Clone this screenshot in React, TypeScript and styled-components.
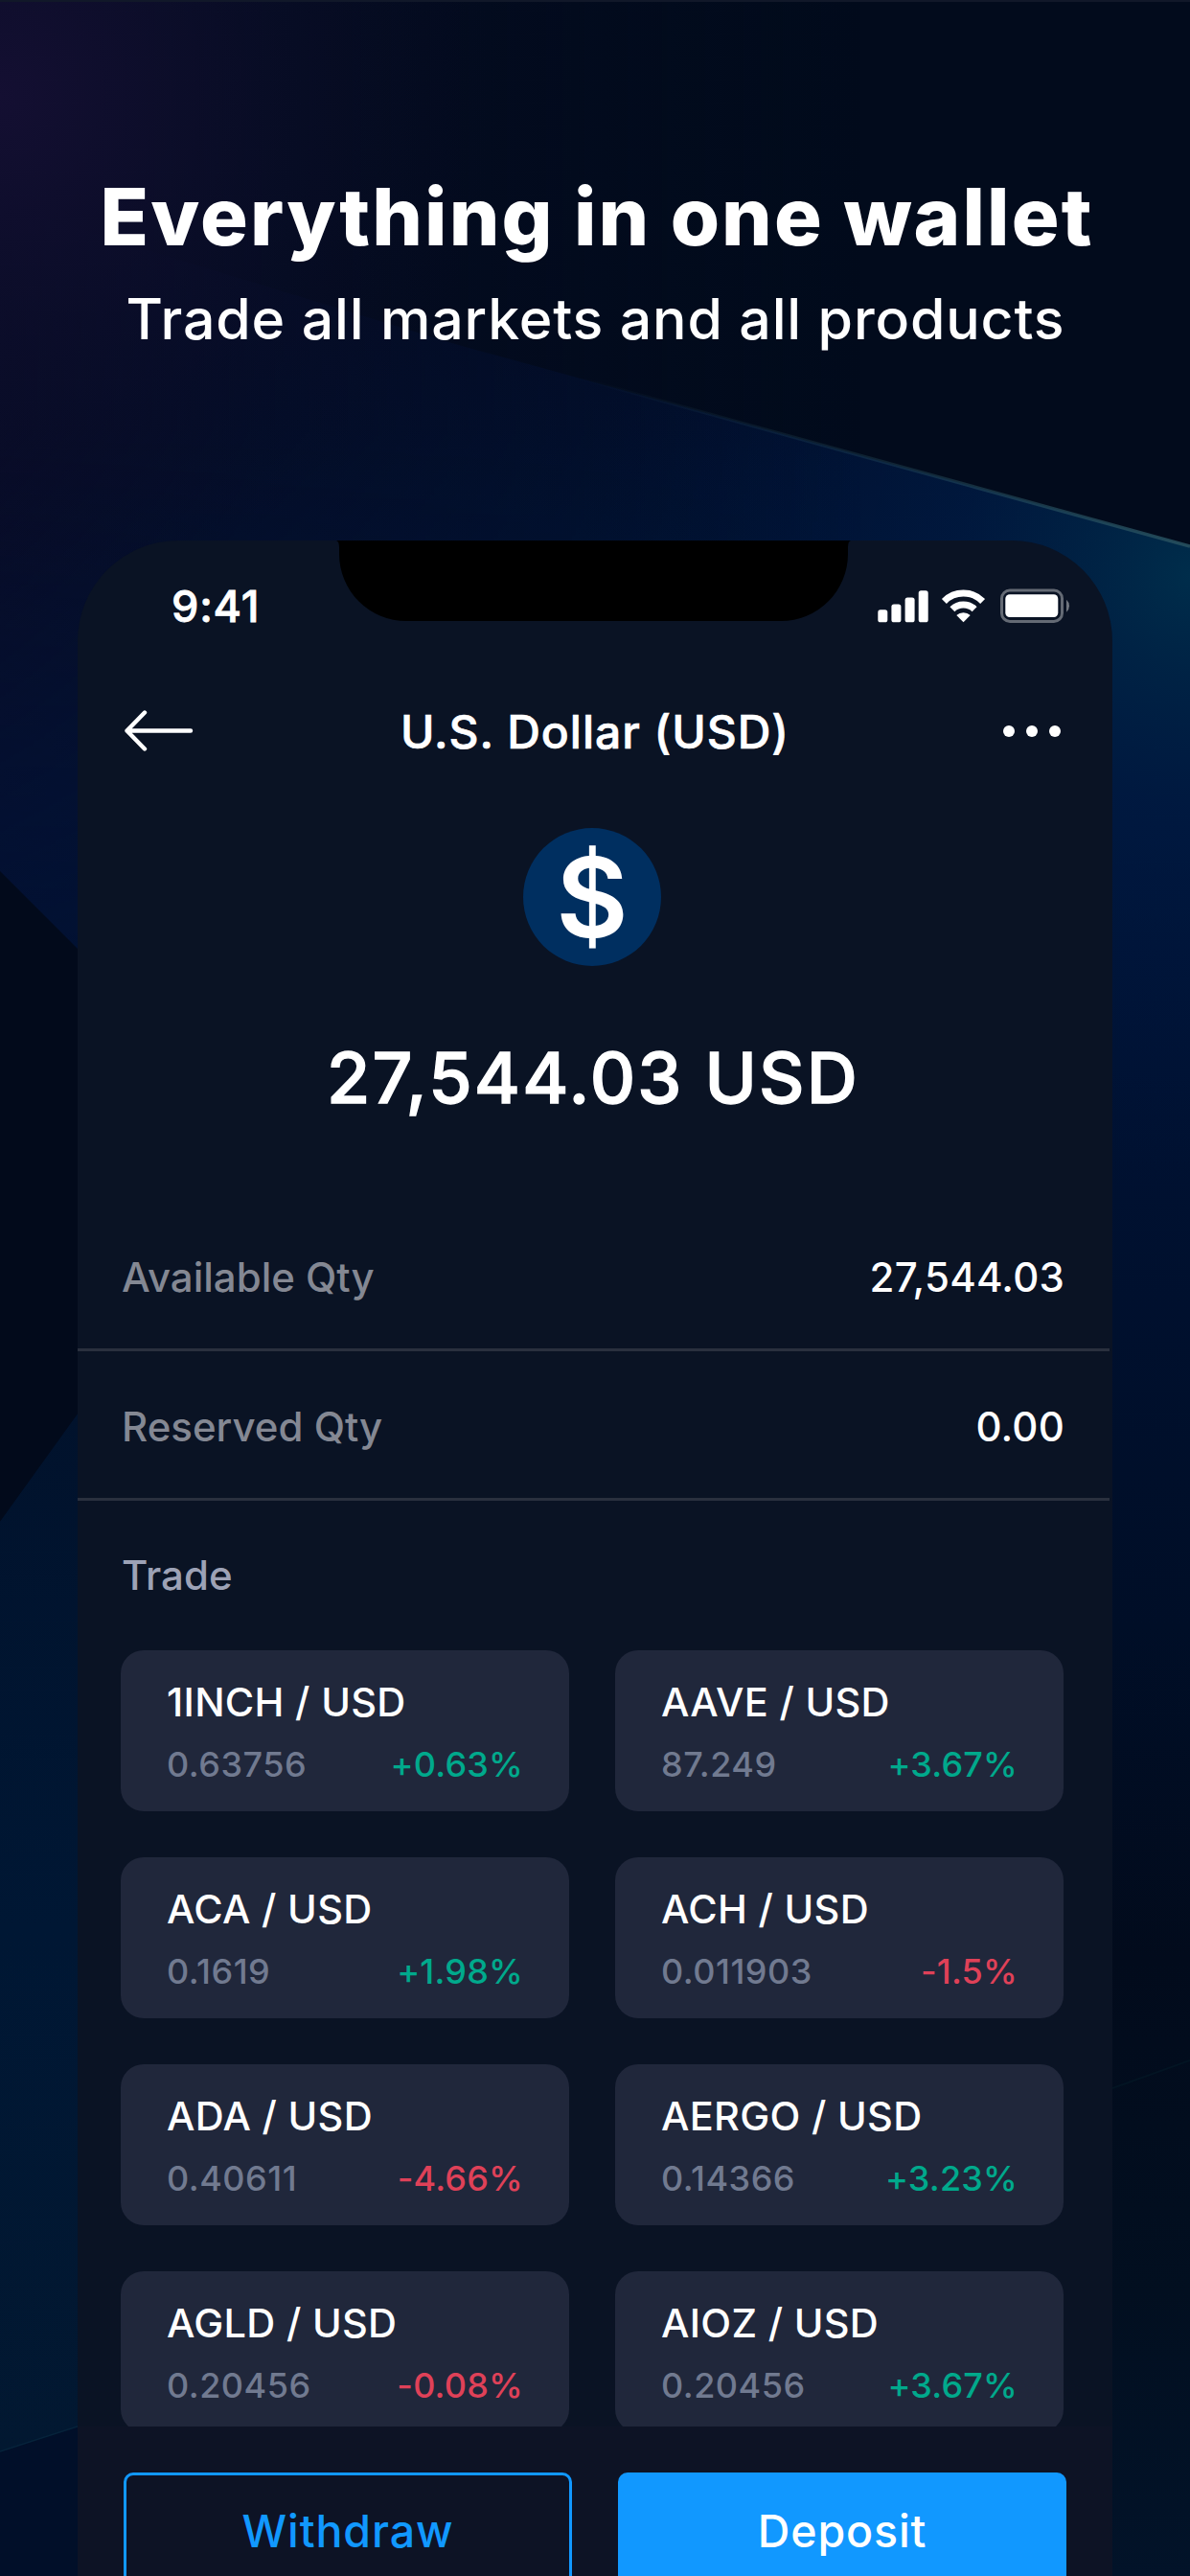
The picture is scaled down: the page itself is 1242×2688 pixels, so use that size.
import styled, { createGlobalStyle } from 'styled-components';

const GlobalStyle = createGlobalStyle`
  * {
    box-sizing: border-box;
  }

  body {
    margin: 0;
    background: #020b1c;
    font-family: Inter, 'Liberation Sans', sans-serif;
    color: #fff;
    -webkit-font-smoothing: antialiased;
  }
`;

const pairs = [
  { name: '1INCH / USD', price: '0.63756', change: '+0.63%' },
  { name: 'AAVE / USD', price: '87.249', change: '+3.67%' },
  { name: 'ACA / USD', price: '0.1619', change: '+1.98%' },
  { name: 'ACH / USD', price: '0.011903', change: '-1.5%' },
  { name: 'ADA / USD', price: '0.40611', change: '-4.66%' },
  { name: 'AERGO / USD', price: '0.14366', change: '+3.23%' },
  { name: 'AGLD / USD', price: '0.20456', change: '-0.08%' },
  { name: 'AIOZ / USD', price: '0.20456', change: '+3.67%' },
];

const Backdrop = () => (
  <BackdropSvg viewBox="0 0 1242 2688" xmlns="http://www.w3.org/2000/svg">
    <defs>
      <radialGradient id="bg_purple" gradientUnits="userSpaceOnUse" cx={0} cy={100} r={520}>
        <stop offset="0%" stopColor="#140f32" />
        <stop offset="45%" stopColor="#0e0e2b" stopOpacity={0.6} />
        <stop offset="100%" stopColor="#080c25" stopOpacity={0} />
      </radialGradient>
      <linearGradient id="bg_wedge" gradientUnits="userSpaceOnUse" x1={0} y1={214} x2={0} y2={2688}>
        <stop offset="0%" stopColor="#040c24" />
        <stop offset="8%" stopColor="#020f2c" />
        <stop offset="18%" stopColor="#001436" />
        <stop offset="26%" stopColor="#001439" />
        <stop offset="40%" stopColor="#001131" />
        <stop offset="60%" stopColor="#000e27" />
        <stop offset="74%" stopColor="#020b1c" />
        <stop offset="88%" stopColor="#020f20" />
        <stop offset="100%" stopColor="#021329" />
      </linearGradient>
      <radialGradient id="bg_teal" gradientUnits="userSpaceOnUse" cx={1242} cy={600} r={640}>
        <stop offset="0%" stopColor="#002d4b" />
        <stop offset="16%" stopColor="#002446" stopOpacity={0.9} />
        <stop offset="38%" stopColor="#001b43" stopOpacity={0.65} />
        <stop offset="100%" stopColor="#00143a" stopOpacity={0} />
      </radialGradient>
      <linearGradient id="bg_shade" gradientUnits="userSpaceOnUse" x1={0} y1={0} x2={900} y2={0}>
        <stop offset="0%" stopColor="#080c28" />
        <stop offset="30%" stopColor="#060c25" stopOpacity={0.55} />
        <stop offset="100%" stopColor="#030b20" stopOpacity={0} />
      </linearGradient>
      <linearGradient id="bg_fade" gradientUnits="userSpaceOnUse" x1={0} y1={450} x2={0} y2={1150}>
        <stop offset="0%" stopColor="#fff" />
        <stop offset="100%" stopColor="#000" />
      </linearGradient>
      <mask id="bg_mask">
        <rect width={1242} height={1150} fill="url(#bg_fade)" />
      </mask>
      <linearGradient id="bg_edge" gradientUnits="userSpaceOnUse" x1={600} y1={394} x2={1242} y2={570}>
        <stop offset="0%" stopColor="#27505f" stopOpacity={0} />
        <stop offset="50%" stopColor="#27505f" stopOpacity={0.35} />
        <stop offset="100%" stopColor="#27505f" stopOpacity={0.9} />
      </linearGradient>
      <linearGradient id="bg_leftBlue" x1={0} y1={0} x2={0} y2={1}>
        <stop offset="0%" stopColor="#01122c" />
        <stop offset="50%" stopColor="#001734" />
        <stop offset="100%" stopColor="#021831" />
      </linearGradient>
    </defs>
    <rect width={1242} height={2688} fill="#020b1c" />
    <path d="M0 214 L475 359 L1242 570 V2688 H0 Z" fill="url(#bg_wedge)" />
    <path d="M0 214 L475 359 L1242 570 V1300 H0 Z" fill="url(#bg_teal)" />
    <rect width={900} height={1150} fill="url(#bg_shade)" mask="url(#bg_mask)" />
    <rect width={620} height={620} fill="url(#bg_purple)" />
    <path d="M600 393.4 L1242 570" stroke="url(#bg_edge)" strokeWidth={3.5} fill="none" />
    {/* facets left of the phone */}
    <path d="M0 909 L90 999 V1463 L0 1588 Z" fill="#020a1b" />
    <path d="M0 1588 L90 1463 V2529 L0 2558 Z" fill="url(#bg_leftBlue)" />
    <path d="M0 2558 L90 2529 V2688 H0 Z" fill="#010f29" />
    <path d="M0 2558 L90 2529" stroke="#06233b" strokeWidth={1.5} />
    <path d="M1150 2183 L1242 2150" stroke="#031423" strokeWidth={2} />
    <rect width={1242} height={2} fill="#111829" />
  </BackdropSvg>
);

const SignalIcon = () => (
  <svg width={53} height={36} viewBox="0 0 53 36" fill="#fff">
    <rect x={0.3} y={22.3} width={10} height={13} rx={2.6} />
    <rect x={14.4} y={16.5} width={10} height={18.8} rx={2.6} />
    <rect x={28.6} y={9.6} width={10} height={25.7} rx={2.6} />
    <rect x={42.7} y={2.3} width={10} height={33} rx={2.6} />
  </svg>
);

const WifiIcon = () => (
  <svg width={47} height={36} viewBox="0 0 47 36" fill="none" stroke="#fff" strokeWidth={7}>
    <path d="M3.4 13.4 A28.5 28.5 0 0 1 43.6 13.4" />
    <path d="M11.9 21.7 A16.5 16.5 0 0 1 35.1 21.7" />
    <path d="M23.5 35.3 L16.3 28 A10.5 10.5 0 0 1 30.7 28 Z" fill="#fff" stroke="none" />
  </svg>
);

const BatteryIcon = () => (
  <svg width={74} height={36} viewBox="0 0 74 36">
    <rect x={1.5} y={2} width={63} height={32.4} rx={8.5} fill="none" stroke="#fff" strokeOpacity={0.37} strokeWidth={3} />
    <rect x={5.3} y={6.3} width={55} height={23.7} rx={4.5} fill="#fff" />
    <path d="M69 11.7 A8.5 8.5 0 0 1 69 24.7 Z" fill="#fff" fillOpacity={0.42} />
  </svg>
);

const BackIcon = () => (
  <BackSvg width={74} height={44} viewBox="0 0 74 44" fill="none" stroke="#fff" strokeWidth={4.4} strokeLinecap="round" strokeLinejoin="round">
    <path d="M22 2.5 L3.5 21.5 L22 40.5 M3.5 21.5 H70" />
  </BackSvg>
);

const MoreIcon = () => (
  <MoreSvg width={60} height={12} viewBox="0 0 60 12" fill="#fff">
    <circle cx={6} cy={6} r={6} />
    <circle cx={30} cy={6} r={6} />
    <circle cx={54} cy={6} r={6} />
  </MoreSvg>
);

const App = () => {
  return (
    <Page>
      <GlobalStyle />
      <Backdrop />
      <Headline>
        <Title>Everything in one wallet</Title>
        <Subtitle>Trade all markets and all products</Subtitle>
      </Headline>
      <Phone>
        <Notch>
          <svg width={537} height={84} viewBox="0 0 537 84">
            <path d="M0 0 H537 Q534 1 534 7 V14 A70 70 0 0 1 464 84 H73 A70 70 0 0 1 3 14 V7 Q3 1 0 0 Z" fill="#000" />
          </svg>
        </Notch>
        <StatusBar>
          <Time>9:41</Time>
          <StatusIcons>
            <SignalIcon />
            <WifiIcon />
            <BatteryIcon />
          </StatusIcons>
        </StatusBar>
        <NavBar>
          <BackIcon />
          <NavTitle>U.S. Dollar (USD)</NavTitle>
          <MoreIcon />
        </NavBar>
        <Summary>
          <Coin>$</Coin>
          <Balance>27,544.03 USD</Balance>
        </Summary>
        <Row>
          <RowLabel>Available Qty</RowLabel>
          <RowValue>27,544.03</RowValue>
        </Row>
        <Row>
          <RowLabel>Reserved Qty</RowLabel>
          <RowValue>0.00</RowValue>
        </Row>
        <SectionTitle>Trade</SectionTitle>
        <PairGrid>
          {pairs.map((p) => (
            <PairCard key={p.name}>
              <PairName>{p.name}</PairName>
              <PairStats>
                <Price>{p.price}</Price>
                <Change $down={p.change.startsWith('-')}>{p.change}</Change>
              </PairStats>
            </PairCard>
          ))}
        </PairGrid>
        <Footer>
          <ActionButton>Withdraw</ActionButton>
          <ActionButton $primary>Deposit</ActionButton>
        </Footer>
      </Phone>
    </Page>
  );
};

const Page = styled.main`
  position: relative;
  width: 1242px;
  height: 2688px;
  overflow: hidden;
`;

const BackdropSvg = styled.svg`
  position: absolute;
  inset: 0;
  width: 1242px;
  height: 2688px;
`;

const Headline = styled.header`
  position: relative;
  display: flex;
  flex-direction: column;
  align-items: center;
  gap: 24px;
  height: 564px;
  padding-top: 178px;
  white-space: nowrap;
`;

const Title = styled.h1`
  margin: 0;
  padding-left: 4px;
  font-size: 83px;
  font-weight: 800;
  line-height: 96px;
  letter-spacing: 2.1px;
`;

const Subtitle = styled.p`
  margin: 0;
  padding-left: 1px;
  font-size: 59px;
  font-weight: 500;
  line-height: 70px;
  letter-spacing: 0.84px;
`;

const Phone = styled.section`
  position: relative;
  display: flex;
  flex-direction: column;
  width: 1080px;
  height: 2124px;
  margin-left: 81px;
  border-radius: 105px 105px 0 0;
  background: #0a1324;
  overflow: hidden;
`;

const Notch = styled.div`
  position: absolute;
  top: 0;
  left: 270px;
  line-height: 0;
`;

const StatusBar = styled.div`
  display: flex;
  flex: none;
  align-items: center;
  justify-content: space-between;
  height: 136px;
  padding: 0 43px 0 98px;
`;

const Time = styled.span`
  font-size: 45px;
  font-weight: 500;
  letter-spacing: 0.8px;
  -webkit-text-stroke: 0.8px #fff;
`;

const StatusIcons = styled.div`
  display: flex;
  align-items: center;

  svg + svg {
    margin-left: 13px;
  }

  svg:last-child {
    margin-left: 15px;
  }
`;

const NavBar = styled.nav`
  display: grid;
  grid-template-columns: 1fr auto 1fr;
  flex: none;
  align-items: center;
  height: 126px;
  padding: 0 54px;
`;

const BackSvg = styled.svg`
  margin-left: -6px;
`;

const MoreSvg = styled.svg`
  justify-self: end;
`;

const NavTitle = styled.h2`
  margin: 0;
  font-size: 48px;
  font-weight: 500;
  letter-spacing: 0.98px;
  -webkit-text-stroke: 0.7px #fff;
`;

const Summary = styled.div`
  display: flex;
  flex-direction: column;
  align-items: center;
  flex: none;
  width: 1074px;
  padding-top: 38px;
`;

const Coin = styled.div`
  display: flex;
  align-items: center;
  justify-content: center;
  width: 144px;
  height: 144px;
  border-radius: 50%;
  background: #002f60;
  font-size: 116px;
  font-weight: 600;
  line-height: 144px;
`;

const Balance = styled.div`
  margin: 72px 0 84px;
  padding-left: 2px;
  font-size: 73.5px;
  font-weight: 500;
  line-height: 90px;
  letter-spacing: 2.2px;
  -webkit-text-stroke: 1.3px #fff;
`;

const Row = styled.div`
  display: flex;
  flex: none;
  align-items: center;
  justify-content: space-between;
  width: 1077px;
  height: 156px;
  padding: 3px 47px 0 46px;
  border-bottom: 3px solid #2a303e;
  font-size: 42px;
  font-weight: 500;
`;

const RowLabel = styled.span`
  color: #848893;
`;

const RowValue = styled.span`
  letter-spacing: 0.2px;
`;

const SectionTitle = styled.h3`
  flex: none;
  margin: 0;
  padding-left: 46px;
  color: #9da2b6;
  font-size: 42px;
  font-weight: 500;
  line-height: 156px;
`;

const PairGrid = styled.div`
  display: grid;
  grid-template-columns: 468px 468px;
  grid-auto-rows: 168px;
  gap: 48px;
  flex: none;
  height: 810px;
  padding-left: 45px;
  overflow: hidden;
`;

const PairCard = styled.article`
  padding: 24px 48px 0;
  border-radius: 24px;
  background: #20273b;
`;

const PairName = styled.div`
  font-size: 41.5px;
  font-weight: 500;
  line-height: 60px;
  letter-spacing: 0.3px;
`;

const PairStats = styled.div`
  display: flex;
  justify-content: space-between;
  margin-top: 5px;
  font-size: 36px;
  font-weight: 500;
  line-height: 60px;
`;

const Price = styled.span`
  color: #717a90;
  letter-spacing: 0.5px;
`;

const Change = styled.span<{ $down?: boolean }>`
  color: ${(p) => (p.$down ? '#df4158' : '#00a98c')};
  letter-spacing: 0.2px;
`;

const Footer = styled.footer`
  display: flex;
  flex: 1;
  gap: 48px;
  padding: 48px 48px 0;
  background: #0d1325;
`;

const ActionButton = styled.button<{ $primary?: boolean }>`
  width: 468px;
  height: 122px;
  padding: 0;
  border: 3px solid #1198ff;
  border-radius: 10px;
  background: ${(p) => (p.$primary ? '#1198ff' : 'transparent')};
  color: ${(p) => (p.$primary ? '#fff' : '#1198ff')};
  font-family: inherit;
  font-size: 46.5px;
  font-weight: 500;
  letter-spacing: 0.9px;
`;

export default App;
